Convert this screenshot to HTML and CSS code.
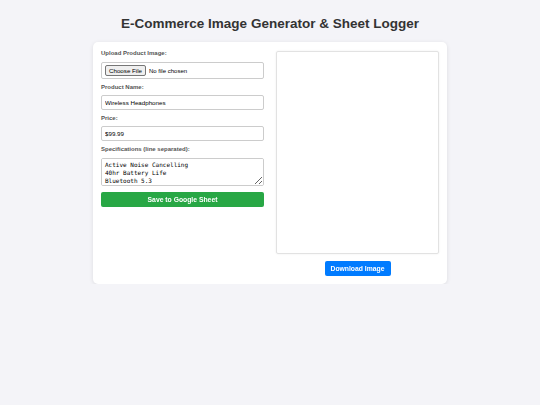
FILE: index.html
```html
<!DOCTYPE html>
<html>
<head>
<meta charset="utf-8">
<link rel="stylesheet" href="styles.css">
</head>
<body>
<h1 class="title">E-Commerce Image Generator &amp; Sheet Logger</h1>
<div class="container">
  <div class="form-col">
    <label class="lbl">Upload Product Image:</label>
    <div class="file-box"><input type="file" class="file-input"></div>
    <label class="lbl">Product Name:</label>
    <input class="field" type="text" value="Wireless Headphones">
    <label class="lbl">Price:</label>
    <input class="field" type="text" value="$99.99">
    <label class="lbl">Specifications (line separated):</label>
    <textarea class="specs">Active Noise Cancelling
40hr Battery Life
Bluetooth 5.3</textarea>
    <button class="btn btn-green">Save to Google Sheet</button>
  </div>
  <div class="preview-col">
    <div class="canvas"></div>
    <button class="btn btn-blue">Download Image</button>
  </div>
</div>
</body>
</html>
```
FILE: styles.css
```css
* { box-sizing: border-box; }
body {
  margin: 0;
  background: #f4f4f8;
  font-family: "Liberation Sans", Arial, sans-serif;
  color: #333;
}
.title {
  margin: 16px 0 10px;
  text-align: center;
  font-size: 13.5px;
  line-height: 16px;
  font-weight: bold;
  color: #333;
}
.container {
  width: 354px;
  margin: 0 auto;
  background: #fff;
  border-radius: 5px;
  box-shadow: 0 1px 4px rgba(0,0,0,0.1);
  padding: 7px 8px 8px;
  display: flex;
  gap: 12px;
}
.form-col {
  width: 163px;
  display: flex;
  flex-direction: column;
}
.lbl {
  display: block;
  font-size: 6px;
  line-height: 8px;
  font-weight: bold;
  color: #555;
  margin-top: 4px;
  margin-bottom: 4px;
}
.lbl:first-child { margin-top: 0; margin-bottom: 5px; }
.file-box {
  height: 17px;
  border: 1px solid #ccc;
  border-radius: 2px;
  padding: 2px 3px;
  display: flex;
  align-items: center;
}
.file-input {
  font-family: "Liberation Sans", Arial, sans-serif;
  font-size: 6px;
  color: #000;
  margin: 0;
}
.file-input::file-selector-button {
  font-family: "Liberation Sans", Arial, sans-serif;
  font-size: 6.2px;
  height: 11px;
  padding: 0 3px;
  margin-right: 3px;
  border: 1px solid #767676;
  border-radius: 2px;
  background: #efefef;
  color: #000;
}
.field {
  height: 15px;
  border: 1px solid #ccc;
  border-radius: 2px;
  padding: 0 3px;
  font-family: "Liberation Sans", Arial, sans-serif;
  font-size: 6.2px;
  color: #000;
  margin: 0;
  outline: none;
}
.specs {
  height: 28px;
  border: 1px solid #ccc;
  border-radius: 2px;
  padding: 2px 3px;
  font-family: "DejaVu Sans Mono", monospace;
  font-size: 6px;
  line-height: 8px;
  color: #000;
  margin: 1px 0 0;
  resize: vertical;
}
.btn {
  height: 15px;
  border: none;
  border-radius: 2px;
  color: #fff;
  font-family: "Liberation Sans", Arial, sans-serif;
  font-size: 6.8px;
  font-weight: bold;
  padding: 0;
  cursor: pointer;
}
.btn-green {
  background: #28a745;
  margin-top: 6px;
  width: 100%;
}
.preview-col {
  width: 163px;
  display: flex;
  flex-direction: column;
  align-items: center;
  padding-top: 2px;
}
.canvas {
  width: 163px;
  height: 203px;
  background: #fff;
  border: 1px solid #e2e2e2;
  border-radius: 2px;
  box-shadow: 0 0 2px rgba(0,0,0,0.08);
}
.btn-blue {
  background: #007bff;
  width: 66px;
  margin-top: 7px;
}
```
